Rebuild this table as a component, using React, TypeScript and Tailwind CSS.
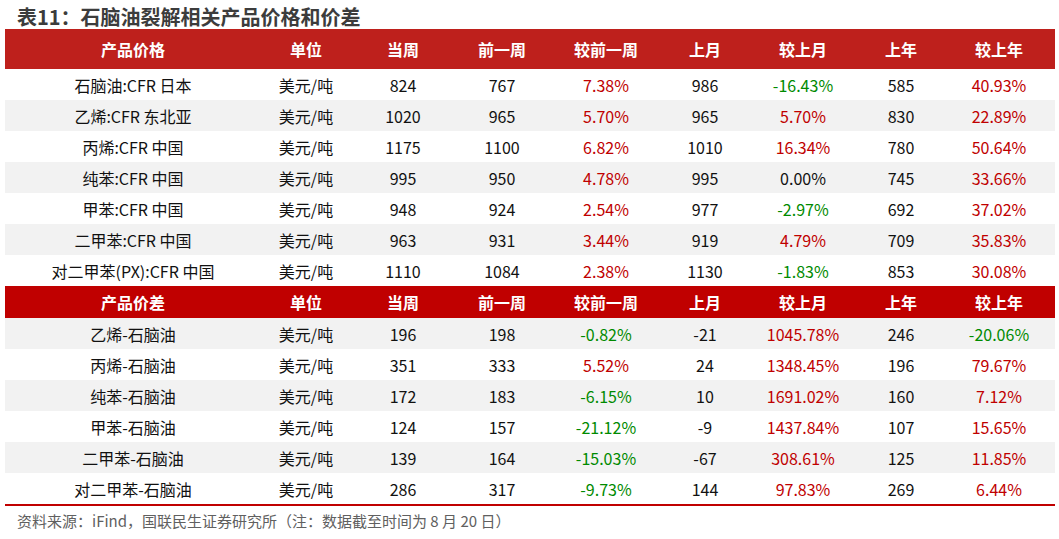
import React from "react";

const cols = "grid grid-cols-[256px_90px_104px_94px_114px_84px_112px_84px_112px]";

const sec1: string[][] = [
  ["石脑油:CFR 日本", "美元/吨", "824", "767", "7.38%", "986", "-16.43%", "585", "40.93%"],
  ["乙烯:CFR 东北亚", "美元/吨", "1020", "965", "5.70%", "965", "5.70%", "830", "22.89%"],
  ["丙烯:CFR 中国", "美元/吨", "1175", "1100", "6.82%", "1010", "16.34%", "780", "50.64%"],
  ["纯苯:CFR 中国", "美元/吨", "995", "950", "4.78%", "995", "0.00%", "745", "33.66%"],
  ["甲苯:CFR 中国", "美元/吨", "948", "924", "2.54%", "977", "-2.97%", "692", "37.02%"],
  ["二甲苯:CFR 中国", "美元/吨", "963", "931", "3.44%", "919", "4.79%", "709", "35.83%"],
  ["对二甲苯(PX):CFR 中国", "美元/吨", "1110", "1084", "2.38%", "1130", "-1.83%", "853", "30.08%"],
];

const sec2: string[][] = [
  ["乙烯-石脑油", "美元/吨", "196", "198", "-0.82%", "-21", "1045.78%", "246", "-20.06%"],
  ["丙烯-石脑油", "美元/吨", "351", "333", "5.52%", "24", "1348.45%", "196", "79.67%"],
  ["纯苯-石脑油", "美元/吨", "172", "183", "-6.15%", "10", "1691.02%", "160", "7.12%"],
  ["甲苯-石脑油", "美元/吨", "124", "157", "-21.12%", "-9", "1437.84%", "107", "15.65%"],
  ["二甲苯-石脑油", "美元/吨", "139", "164", "-15.03%", "-67", "308.61%", "125", "11.85%"],
  ["对二甲苯-石脑油", "美元/吨", "286", "317", "-9.73%", "144", "97.83%", "269", "6.44%"],
];

const pctColor = (s: string, idx: number) => {
  if (idx === 4 || idx === 6 || idx === 8) {
    if (s.startsWith("-")) return "text-[#008a00]";
    if (s === "0.00%") return "text-[#111111]";
    return "text-[#c00000]";
  }
  return "text-[#111111]";
};

function Header({ first, tall, bg }: { first: string; tall?: boolean; bg: string }) {
  const labels = [first, "单位", "当周", "前一周", "较前一周", "上月", "较上月", "上年", "较上年"];
  return (
    <div className={`${cols} ${bg} ${tall ? "h-[40px]" : "h-[32px]"} items-center`}>
      {labels.map((l, i) => (
        <div key={i} className="text-center text-white font-bold text-[16px] leading-none">
          {l}
        </div>
      ))}
    </div>
  );
}

function Row({ r, gray, last }: { r: string[]; gray: boolean; last?: boolean }) {
  return (
    <div
      className={`${cols} h-[31px] items-center ${gray ? "bg-[#f2f2f2]" : "bg-white"} ${
        last ? "border-b-2 border-[#c00000] box-content" : ""
      }`}
    >
      {r.map((v, i) => (
        <div key={i} className={`text-center text-[16px] leading-none ${pctColor(v, i)}`}>
          {v}
        </div>
      ))}
    </div>
  );
}

export default function App() {
  return (
    <div
      className="w-[1059px] h-[539px] bg-white overflow-hidden"
      style={{ fontFamily: '"Noto Sans CJK SC", "Noto Sans", sans-serif' }}
    >
      <div className="h-[29px] pl-[17px] flex items-center">
        <span className="text-[20px] font-bold text-[#3c3c3c] leading-none pt-[5px]">
          表11：石脑油裂解相关产品价格和价差
        </span>
      </div>
      <div className="ml-[5px] w-[1050px]">
        <Header first="产品价格" tall bg="bg-[#be201c]" />
        {sec1.map((r, i) => (
          <Row key={i} r={r} gray={i % 2 === 1} />
        ))}
        <Header first="产品价差" bg="bg-[#c00000]" />
        {sec2.map((r, i) => (
          <Row key={i} r={r} gray={i % 2 === 0} last={i === sec2.length - 1} />
        ))}
      </div>
      <div className="pl-[17px] pt-[7px] text-[15px] text-[#606060] leading-none">
        资料来源：iFind，国联民生证券研究所（注：数据截至时间为 8 月 20 日）
      </div>
    </div>
  );
}
